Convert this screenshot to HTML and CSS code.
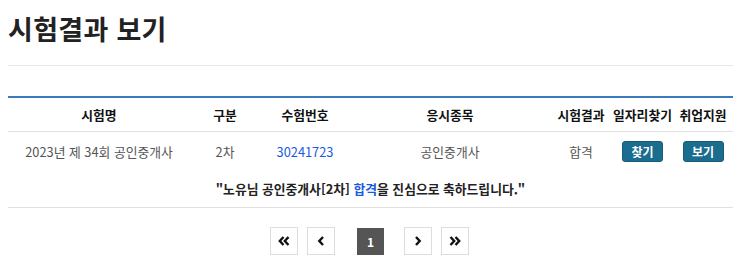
FILE: index.html
```html
<!DOCTYPE html>
<html lang="ko">
<head>
<meta charset="utf-8">
<title>시험결과 보기</title>
<link rel="stylesheet" href="styles.css">
</head>
<body>
<div class="wrap">
  <h1 class="title">시험결과 보기</h1>
  <table class="result">
    <colgroup>
      <col class="c1"><col class="c2"><col class="c3"><col class="c4"><col class="c5"><col class="c6"><col class="c7">
    </colgroup>
    <thead>
      <tr>
        <th>시험명</th><th>구분</th><th>수험번호</th><th>응시종목</th><th>시험결과</th><th>일자리찾기</th><th>취업지원</th>
      </tr>
    </thead>
    <tbody>
      <tr class="data">
        <td>2023년 제 34회 공인중개사</td>
        <td>2차</td>
        <td><a class="num" href="#">30241723</a></td>
        <td>공인중개사</td>
        <td>합격</td>
        <td><button class="btn" type="button">찾기</button></td>
        <td><button class="btn" type="button">보기</button></td>
      </tr>
      <tr class="msg">
        <td colspan="7">"노유님 공인중개사[2차] <span class="pass">합격</span>을 진심으로 축하드립니다."</td>
      </tr>
    </tbody>
  </table>
  <nav class="paging">
    <a class="pg" href="#"><svg width="12" height="10" viewBox="0 0 12 10"><path d="M5.5 1 L1.8 5 L5.5 9 M10.5 1 L6.8 5 L10.5 9" fill="none" stroke="#111" stroke-width="2.4"/></svg></a>
    <a class="pg" href="#"><svg width="8" height="10" viewBox="0 0 8 10"><path d="M6 1 L2.3 5 L6 9" fill="none" stroke="#111" stroke-width="2.4"/></svg></a>
    <span class="pg active">1</span>
    <a class="pg" href="#"><svg width="8" height="10" viewBox="0 0 8 10"><path d="M2 1 L5.7 5 L2 9" fill="none" stroke="#111" stroke-width="2.4"/></svg></a>
    <a class="pg" href="#"><svg width="12" height="10" viewBox="0 0 12 10"><path d="M1.5 1 L5.2 5 L1.5 9 M6.5 1 L10.2 5 L6.5 9" fill="none" stroke="#111" stroke-width="2.4"/></svg></a>
  </nav>
</div>
</body>
</html>
```
FILE: styles.css
```css
html, body {
  margin: 0;
  padding: 0;
  background: #fff;
}
body {
  padding: 0 8px;
  font-family: "Noto Sans CJK KR", "Noto Sans", sans-serif;
  color: #222;
}
.wrap {
  width: 725px;
}
.title {
  margin: 0;
  padding: 10px 0 0;
  height: 66px;
  box-sizing: border-box;
  font-size: 27px;
  line-height: 38px;
  font-weight: 700;
  color: #222;
  border-bottom: 1px solid #e8e8e8;
  letter-spacing: 0.3px;
}
.result {
  margin-top: 30px;
  width: 725px;
  table-layout: fixed;
  border-collapse: collapse;
  border-top: 2px solid #3a7bbd;
  font-size: 12.8px;
}
.c1 { width: 182px; }
.c2 { width: 70px; }
.c3 { width: 90px; }
.c4 { width: 200px; }
.c5 { width: 62px; }
.c6 { width: 61px; }
.c7 { width: 60px; }
.result th {
  height: 33px;
  padding: 0;
  font-weight: 700;
  color: #111;
  text-align: center;
  white-space: nowrap;
  border-bottom: 1px solid #e0e0e0;
}
.result td {
  padding: 0;
  text-align: center;
  white-space: nowrap;
}
.data td {
  height: 38px;
  color: #555;
}
.num {
  color: #1a5ae0;
  text-decoration: none;
}
.btn {
  width: 41px;
  height: 21px;
  padding: 0;
  border: 1px solid #175d79;
  border-radius: 3px;
  background: #1b6d8f;
  color: #fff;
  font-family: inherit;
  font-size: 12px;
  font-weight: 700;
  line-height: 19px;
  cursor: pointer;
}
.msg td {
  height: 37px;
  font-weight: 700;
  color: #222;
  border-bottom: 1px solid #e0e0e0;
}
.pass {
  color: #1a5ae0;
}
.paging {
  display: flex;
  justify-content: center;
  align-items: center;
  gap: 9px;
  margin-top: 19px;
  padding-right: 2px;
}
.pg {
  display: flex;
  align-items: center;
  justify-content: center;
  width: 28px;
  height: 28px;
  box-sizing: border-box;
  border: 1px solid #ddd;
  background: #fff;
  text-decoration: none;
}
.pg.active {
  width: 27px;
  height: 27px;
  margin: 0 11px 0 13px;
  border: none;
  background: #555;
  color: #fff;
  font-size: 12px;
  font-weight: 700;
}
```
